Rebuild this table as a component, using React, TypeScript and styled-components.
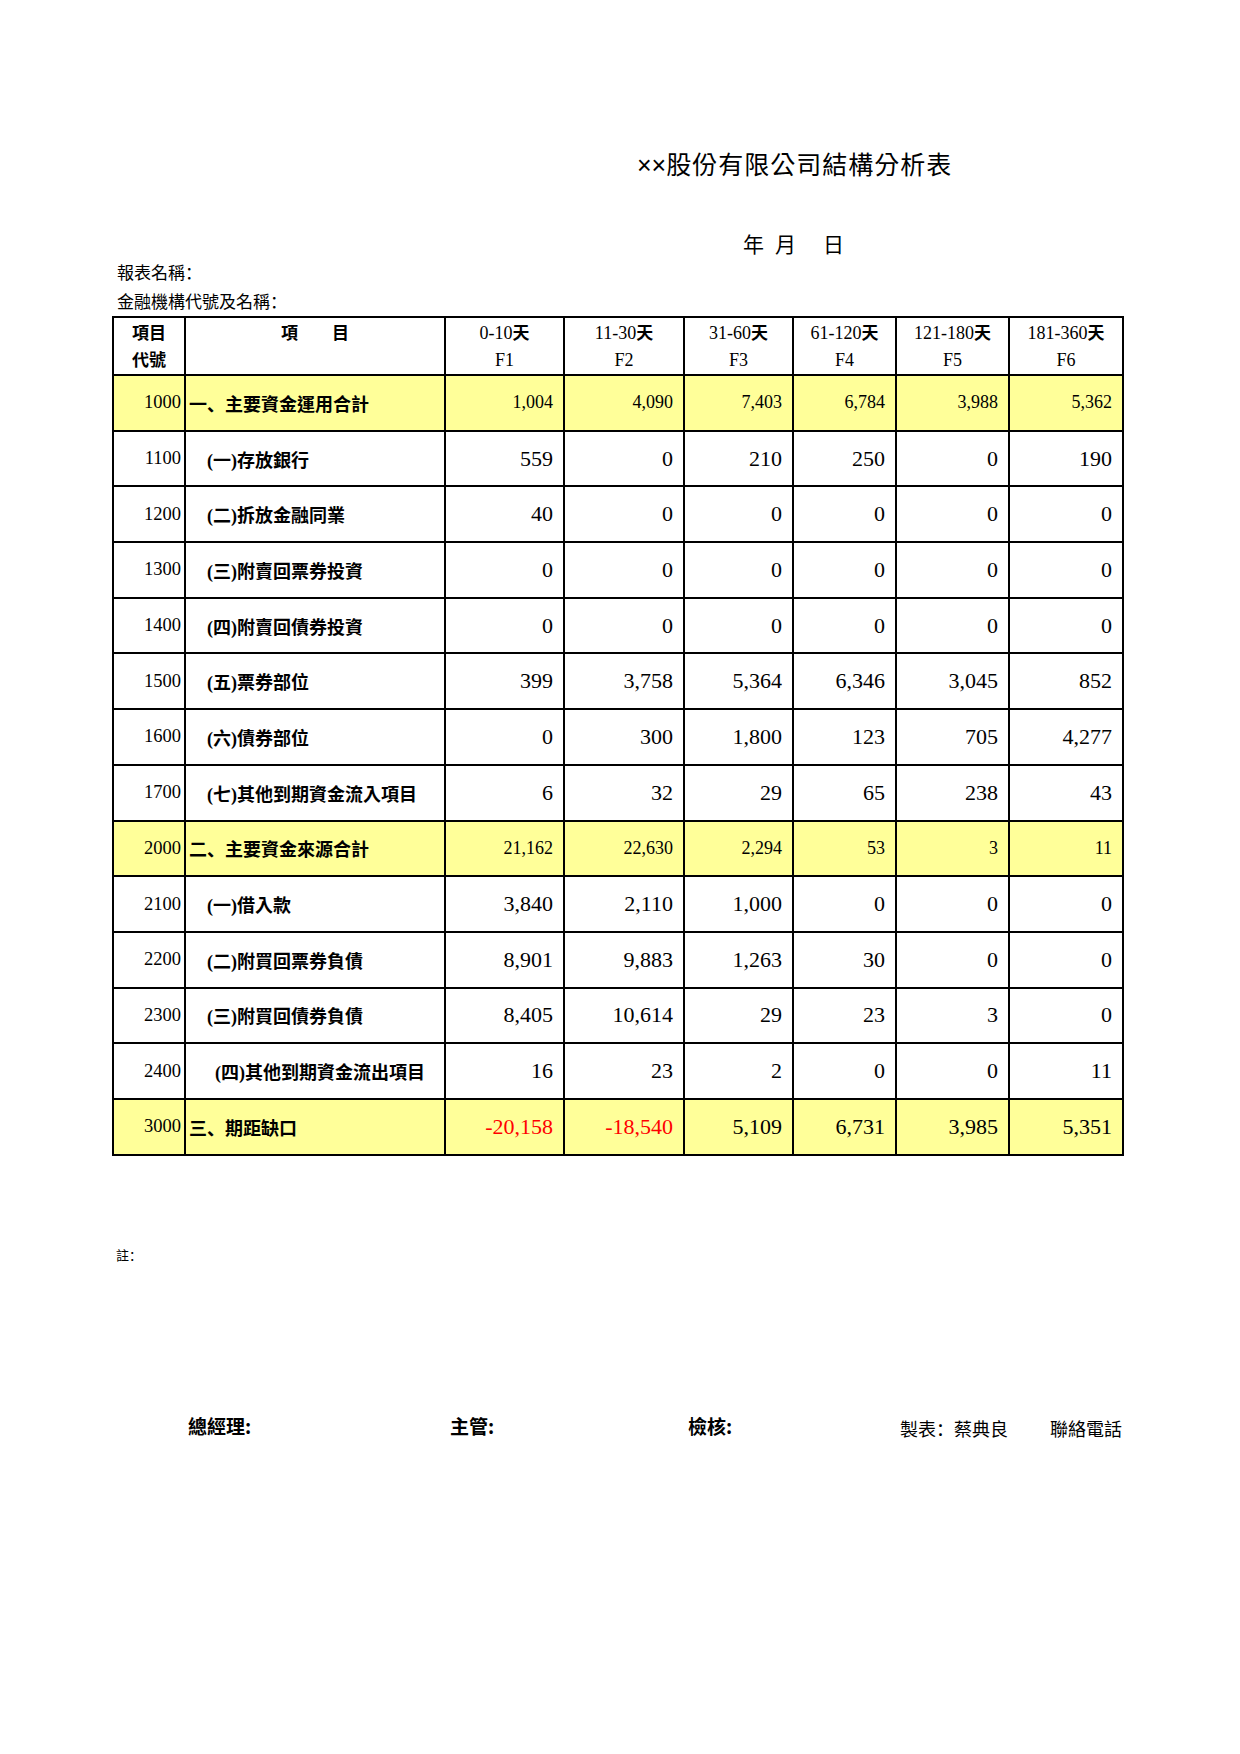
import React from 'react';
import styled, { createGlobalStyle } from 'styled-components';

const GlobalStyle = createGlobalStyle`
  html, body {
    margin: 0;
    padding: 0;
    background: #fff;
  }
  body {
    font-family: "Noto Sans CJK TC", "Liberation Sans", sans-serif;
    color: #000;
  }
`;

type Row = {
  code: string;
  label: string;
  values: string[];
  total?: boolean;
  big?: boolean;
  indent?: number;
};

const columns = [
  { range: '0-10', code: 'F1' },
  { range: '11-30', code: 'F2' },
  { range: '31-60', code: 'F3' },
  { range: '61-120', code: 'F4' },
  { range: '121-180', code: 'F5' },
  { range: '181-360', code: 'F6' },
];

const widths = [72, 260, 119, 120, 109, 103, 113, 114];

const rows: Row[] = [
  { code: '1000', label: '一、主要資金運用合計', values: ['1,004', '4,090', '7,403', '6,784', '3,988', '5,362'], total: true },
  { code: '1100', label: '(一)存放銀行', values: ['559', '0', '210', '250', '0', '190'] },
  { code: '1200', label: '(二)拆放金融同業', values: ['40', '0', '0', '0', '0', '0'] },
  { code: '1300', label: '(三)附賣回票券投資', values: ['0', '0', '0', '0', '0', '0'] },
  { code: '1400', label: '(四)附賣回債券投資', values: ['0', '0', '0', '0', '0', '0'] },
  { code: '1500', label: '(五)票券部位', values: ['399', '3,758', '5,364', '6,346', '3,045', '852'] },
  { code: '1600', label: '(六)債券部位', values: ['0', '300', '1,800', '123', '705', '4,277'] },
  { code: '1700', label: '(七)其他到期資金流入項目', values: ['6', '32', '29', '65', '238', '43'] },
  { code: '2000', label: '二、主要資金來源合計', values: ['21,162', '22,630', '2,294', '53', '3', '11'], total: true },
  { code: '2100', label: '(一)借入款', values: ['3,840', '2,110', '1,000', '0', '0', '0'] },
  { code: '2200', label: '(二)附買回票券負債', values: ['8,901', '9,883', '1,263', '30', '0', '0'] },
  { code: '2300', label: '(三)附買回債券負債', values: ['8,405', '10,614', '29', '23', '3', '0'] },
  { code: '2400', label: '(四)其他到期資金流出項目', values: ['16', '23', '2', '0', '0', '11'], indent: 29 },
  { code: '3000', label: '三、期距缺口', values: ['-20,158', '-18,540', '5,109', '6,731', '3,985', '5,351'], total: true, big: true },
];

// 、 and ： sit low-left in the sheet, as in the simplified-style glyphs
const punct = (text: string) =>
  text.split(/([、：])/).map((part, i) =>
    part === '、' || part === '：' ? <Punct key={i}>{part}</Punct> : part
  );

export default function App() {
  return (
    <>
      <GlobalStyle />
      <Page>
        <Title>
          <Cross>××</Cross>股份有限公司結構分析表
        </Title>
        <DateLine>
          <DatePart $gap={0}>年</DatePart>
          <DatePart $gap={11}>月</DatePart>
          <DatePart $gap={27}>日</DatePart>
        </DateLine>
        <MetaLine>{punct('報表名稱：')}</MetaLine>
        <MetaLine>{punct('金融機構代號及名稱：')}</MetaLine>

        <Sheet>
          <colgroup>
            {widths.map((w, i) => (
              <col key={i} style={{ width: w }} />
            ))}
          </colgroup>
          <thead>
            <HeadRow>
              <HeadCell $bold>項目<br />代號</HeadCell>
              <HeadCell $bold>項　　目</HeadCell>
              {columns.map((c) => (
                <HeadCell key={c.code}>
                  {c.range}<Day>天</Day>
                  <br />
                  {c.code}
                </HeadCell>
              ))}
            </HeadRow>
          </thead>
          <tbody>
            {rows.map((r) => (
              <BodyRow key={r.code} $total={r.total}>
                <CodeCell>{r.code}</CodeCell>
                <LabelCell $indent={r.total ? 3 : r.indent ?? 21}>{punct(r.label)}</LabelCell>
                {r.values.map((v, i) => (
                  <NumCell
                    key={i}
                    $big={!r.total || r.big}
                    $negative={v.startsWith('-')}
                  >
                    {v}
                  </NumCell>
                ))}
              </BodyRow>
            ))}
          </tbody>
        </Sheet>

        <Note>{punct('註：')}</Note>

        <Signatures>
          <Sign $bold>總經理:</Sign>
          <Sign $bold>主管:</Sign>
          <Sign $bold>檢核:</Sign>
          <Sign>{punct('製表：蔡典良')}</Sign>
          <Sign>聯絡電話</Sign>
        </Signatures>
      </Page>
    </>
  );
}

const Page = styled.div`
  width: 1240px;
  min-height: 1754px;
  padding-top: 148px;
  box-sizing: border-box;
`;

const Title = styled.div`
  margin-left: 637px;
  font-size: 25px;
  line-height: 30px;
  font-weight: 400;
  letter-spacing: 1px;
`;

const Cross = styled.span`
  font-family: "Liberation Sans", sans-serif;
  letter-spacing: 0;
`;

const Punct = styled.span`
  font-family: "Noto Sans CJK SC", sans-serif;
`;

const DateLine = styled.div`
  margin-top: 51px;
  margin-bottom: 2px;
  margin-left: 743px;
  display: flex;
  font-size: 21px;
  line-height: 24px;
`;

const DatePart = styled.span<{ $gap: number }>`
  margin-left: ${(p) => p.$gap}px;
`;

const MetaLine = styled.div`
  margin-left: 117px;
  font-size: 17px;
  line-height: 29px;
`;

const Sheet = styled.table`
  margin-top: 1px;
  margin-left: 112px;
  width: 1010px;
  table-layout: fixed;
  border-collapse: collapse;
  border: 2px solid #000;
`;

const HeadRow = styled.tr`
  height: 56px;
`;

const HeadCell = styled.th<{ $bold?: boolean }>`
  border: 2px solid #000;
  padding: 0;
  vertical-align: top;
  text-align: center;
  font-family: ${(p) => (p.$bold ? '"Noto Sans CJK TC", sans-serif' : '"Liberation Serif", "Noto Sans CJK TC", serif')};
  font-weight: ${(p) => (p.$bold ? 700 : 400)};
  font-size: ${(p) => (p.$bold ? '17px' : '18px')};
  line-height: 27px;
`;

const Day = styled.span`
  font-family: "Noto Sans CJK TC", sans-serif;
  font-weight: 700;
  font-size: 17px;
`;

const BodyRow = styled.tr<{ $total?: boolean }>`
  height: 55.7px;
  background: ${(p) => (p.$total ? '#ffff99' : '#fff')};
`;

const CodeCell = styled.td`
  border: 2px solid #000;
  padding: 0 3px 0 0;
  text-align: right;
  vertical-align: middle;
  font-family: "Liberation Serif", serif;
  font-size: 18.5px;
`;

const LabelCell = styled.td<{ $indent: number }>`
  border: 2px solid #000;
  padding: 0 0 0 ${(p) => p.$indent}px;
  text-align: left;
  vertical-align: middle;
  white-space: nowrap;
  font-family: "Liberation Serif", "Noto Sans CJK TC", serif;
  font-weight: 700;
  font-size: 18px;
`;

const NumCell = styled.td<{ $big?: boolean; $negative?: boolean }>`
  border: 2px solid #000;
  padding: 0 10px 0 0;
  text-align: right;
  vertical-align: middle;
  font-family: "Liberation Serif", serif;
  font-size: ${(p) => (p.$big ? '22px' : '18px')};
  color: ${(p) => (p.$negative ? '#ff0000' : '#000')};
`;

const Note = styled.div`
  margin-top: 89px;
  margin-left: 116px;
  font-size: 13px;
  line-height: 20px;
`;

const Signatures = styled.div`
  margin-top: 147px;
  padding-left: 188px;
  display: grid;
  grid-template-columns: 262px 238px 212px 150px auto;
  align-items: center;
  line-height: 24px;
`;

const Sign = styled.div<{ $bold?: boolean }>`
  font-size: ${(p) => (p.$bold ? '19px' : '18px')};
  font-weight: ${(p) => (p.$bold ? 700 : 400)};
  ${(p) => (p.$bold ? '' : 'margin-top: 4px;')}
`;
